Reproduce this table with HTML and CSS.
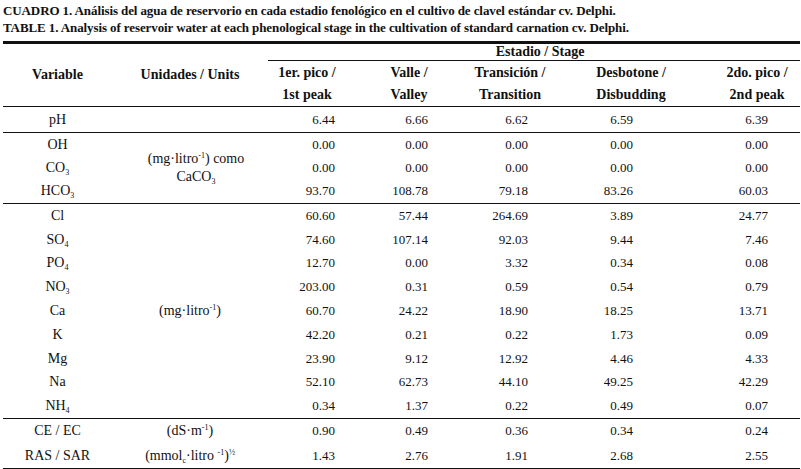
FILE: index.html
```html
<!DOCTYPE html>
<html lang="es">
<head>
<meta charset="utf-8">
<title>Cuadro 1</title>
<link rel="stylesheet" href="styles.css">
</head>
<body>
<div class="page">
  <p class="cap">CUADRO 1. Análisis del agua de reservorio en cada estadio fenológico en el cultivo de clavel estándar cv. Delphi.</p>
  <p class="cap">TABLE 1. Analysis of reservoir water at each phenological stage in the cultivation of standard carnation cv. Delphi.</p>
  <table class="tbl">
    <colgroup>
      <col class="w-var"><col class="w-unit"><col class="w-c1"><col class="w-c2"><col class="w-c3"><col class="w-c4"><col class="w-c5">
    </colgroup>
    <thead>
      <tr class="hr1">
        <th rowspan="2" class="hv">Variable</th>
        <th rowspan="2" class="hu">Unidades / Units</th>
        <th colspan="5" class="stage">Estadio / Stage</th>
      </tr>
      <tr class="hr2">
        <th class="sh">1er. pico /<br>1st peak</th>
        <th class="sh">Valle /<br>Valley</th>
        <th class="sh">Transición /<br>Transition</th>
        <th class="sh">Desbotone /<br>Disbudding</th>
        <th class="sh">2do. pico /<br>2nd peak</th>
      </tr>
    </thead>
    <tbody class="grp g1">
      <tr><td class="v">pH</td><td class="u"></td><td class="d1">6.44</td><td class="d2">6.66</td><td class="d3">6.62</td><td class="d4">6.59</td><td class="d5">6.39</td></tr>
    </tbody>
    <tbody class="grp g2">
      <tr><td class="v">OH</td><td class="u" rowspan="3"><span class="ublock">(mg·litro<sup>-1</sup>) como<br>CaCO<sub>3</sub></span></td><td class="d1">0.00</td><td class="d2">0.00</td><td class="d3">0.00</td><td class="d4">0.00</td><td class="d5">0.00</td></tr>
      <tr><td class="v">CO<sub>3</sub></td><td class="d1">0.00</td><td class="d2">0.00</td><td class="d3">0.00</td><td class="d4">0.00</td><td class="d5">0.00</td></tr>
      <tr><td class="v">HCO<sub>3</sub></td><td class="d1">93.70</td><td class="d2">108.78</td><td class="d3">79.18</td><td class="d4">83.26</td><td class="d5">60.03</td></tr>
    </tbody>
    <tbody class="grp g3">
      <tr><td class="v">Cl</td><td class="u" rowspan="9">(mg·litro<sup>-1</sup>)</td><td class="d1">60.60</td><td class="d2">57.44</td><td class="d3">264.69</td><td class="d4">3.89</td><td class="d5">24.77</td></tr>
      <tr><td class="v">SO<sub>4</sub></td><td class="d1">74.60</td><td class="d2">107.14</td><td class="d3">92.03</td><td class="d4">9.44</td><td class="d5">7.46</td></tr>
      <tr><td class="v">PO<sub>4</sub></td><td class="d1">12.70</td><td class="d2">0.00</td><td class="d3">3.32</td><td class="d4">0.34</td><td class="d5">0.08</td></tr>
      <tr><td class="v">NO<sub>3</sub></td><td class="d1">203.00</td><td class="d2">0.31</td><td class="d3">0.59</td><td class="d4">0.54</td><td class="d5">0.79</td></tr>
      <tr><td class="v">Ca</td><td class="d1">60.70</td><td class="d2">24.22</td><td class="d3">18.90</td><td class="d4">18.25</td><td class="d5">13.71</td></tr>
      <tr><td class="v">K</td><td class="d1">42.20</td><td class="d2">0.21</td><td class="d3">0.22</td><td class="d4">1.73</td><td class="d5">0.09</td></tr>
      <tr><td class="v">Mg</td><td class="d1">23.90</td><td class="d2">9.12</td><td class="d3">12.92</td><td class="d4">4.46</td><td class="d5">4.33</td></tr>
      <tr><td class="v">Na</td><td class="d1">52.10</td><td class="d2">62.73</td><td class="d3">44.10</td><td class="d4">49.25</td><td class="d5">42.29</td></tr>
      <tr><td class="v">NH<sub>4</sub></td><td class="d1">0.34</td><td class="d2">1.37</td><td class="d3">0.22</td><td class="d4">0.49</td><td class="d5">0.07</td></tr>
    </tbody>
    <tbody class="grp g4">
      <tr><td class="v">CE / EC</td><td class="u">(dS·m<sup>-1</sup>)</td><td class="d1">0.90</td><td class="d2">0.49</td><td class="d3">0.36</td><td class="d4">0.34</td><td class="d5">0.24</td></tr>
      <tr><td class="v">RAS / SAR</td><td class="u">(mmol<sub>c</sub>·litro <sup>-1</sup>)<sup>½</sup></td><td class="d1">1.43</td><td class="d2">2.76</td><td class="d3">1.91</td><td class="d4">2.68</td><td class="d5">2.55</td></tr>
    </tbody>
  </table>
</div>
</body>
</html>
```
FILE: styles.css
```css
html, body {
  margin: 0;
  padding: 0;
  background: #fff;
}
.page {
  padding: 2px 1px 0 3px;
  width: 797px;
  font-family: "Liberation Serif", "Times New Roman", serif;
  color: #111;
}
.cap {
  margin: 0;
  font-weight: bold;
  font-size: 13px;
  line-height: 17px;
  white-space: nowrap;
  letter-spacing: -0.1px;
}
.tbl {
  margin-top: 5px;
  width: 797px;
  table-layout: fixed;
  border-collapse: collapse;
  border-top: 3px solid #111;
  border-bottom: 3px solid #111;
  font-size: 13px;
}
.w-var { width: 115px; }
.w-unit { width: 150px; }
.w-c1 { width: 78px; }
.w-c2 { width: 126px; }
.w-c3 { width: 76px; }
.w-c4 { width: 166px; }
.w-c5 { width: 86px; }
th, td {
  padding: 0;
  white-space: nowrap;
}
th {
  font-weight: bold;
  font-size: 14px;
  vertical-align: middle;
}
.hr1 { height: 18px; }
.stage {
  line-height: 16px;
  padding-left: 12px;
  vertical-align: middle;
}
.hv { padding-right: 6px; }
.hu { padding-right: 6px; }
.hr2 .sh {
  border-top: 1px solid #111;
  line-height: 22px;
  height: 41px;
  padding-top: 1px;
}
thead {
  border-bottom: 1px solid #111;
}
.grp + .grp {
  border-top: 1px solid #111;
}
td {
  line-height: 16px;
  vertical-align: middle;
}
.g1 td { height: 25px; }
.g2 td { height: 23.33px; }
.g3 td { height: 23.8px; }
.g4 td { height: 24.5px; }
.v {
  font-size: 14px;
  text-align: center;
  padding-right: 6px;
}
.u {
  font-size: 14px;
  text-align: center;
  padding-right: 6px;
}
.ublock {
  display: inline-block;
  line-height: 18px;
  padding-left: 12px;
}
.d1, .d2, .d3, .d4, .d5 { text-align: right; }
.d1 { padding-right: 11px; }
.d2 { padding-right: 44px; }
.d3 { padding-right: 20px; }
.d4 { padding-right: 81px; }
.d5 { padding-right: 32px; }
sub, sup {
  font-size: 8px;
  line-height: 0;
  position: relative;
  vertical-align: baseline;
}
sub { top: 3px; }
sup { top: -5px; }
```
